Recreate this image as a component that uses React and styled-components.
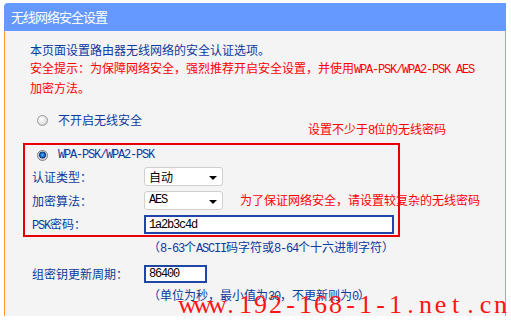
import React from "react";
import styled, { createGlobalStyle } from "styled-components";

const BLUE = "#0c3a9c";
const RED = "#ff0000";

const GlobalStyle = createGlobalStyle`
  html, body {
    margin: 0;
    padding: 0;
    background: #fff;
  }
  body {
    font-family: "Noto Sans CJK SC", "Noto Sans", sans-serif;
  }
`;

const Page = styled.div`
  width: 511px;
  height: 323px;
  padding: 3px 0 0 4px;
  box-sizing: border-box;
  overflow: hidden;
`;

const Frame = styled.div`
  width: 502px;
`;

const Header = styled.div`
  height: 28px;
  background: #6699ff;
  border-top-left-radius: 4px;
  color: #fff;
  font-size: 13px;
  line-height: 28px;
  padding-left: 7px;
  letter-spacing: -1px;
`;

const Panel = styled.div`
  position: relative;
  height: 285px;
  box-sizing: border-box;
  background: #f4f4f4;
  border-left: 1px solid #ff9a2e;
  border-right: 1px solid #ff9a2e;
  padding: 10px 0 0 25px;
  color: ${BLUE};
  font-size: 12px;
`;

const Intro = styled.p`
  margin: 0;
  line-height: 18px;
  white-space: nowrap;
`;

const Warn = styled.span`
  color: ${RED};
`;

const Mono = styled.span`
  font-family: "Liberation Mono", monospace;
  font-size: 12px;
  letter-spacing: -1.2px;
`;

const RadioRow = styled.div`
  display: flex;
  align-items: center;
  gap: 10px;
  height: 16px;
  line-height: 16px;
  margin: ${(p) => p.$margin};
`;

const Radio = styled.span`
  width: 11px;
  height: 11px;
  box-sizing: border-box;
  border-radius: 50%;
  border: 1px solid ${(p) => (p.$checked ? "#7d7d7d" : "#9a9a9a")};
  background: ${(p) =>
    p.$checked
      ? "radial-gradient(circle at 50% 45%, #6fc0ff 0, #1167c8 2px, #123a6e 3.2px, #dcdcdc 3.8px, #c4c4c4 100%)"
      : "radial-gradient(circle at 40% 35%, #ffffff 0, #e4e4e4 55%, #bcbcbc 100%)"};
`;

const SecurityBox = styled.div`
  width: 377px;
  box-sizing: border-box;
  margin: 15px 0 0 -7px;
  border: 2px solid #e60000;
  padding: 0 0 1px 7px;
`;

const FormGrid = styled.div`
  display: grid;
  grid-template-columns: 112px auto;
  grid-auto-rows: 19px;
  row-gap: 5px;
  align-items: center;
  margin: ${(p) => p.$margin};
`;

const Label = styled.span`
  line-height: 19px;
  white-space: nowrap;
`;

const Select = styled.div`
  width: 79px;
  height: 19px;
  box-sizing: border-box;
  display: flex;
  align-items: center;
  justify-content: space-between;
  padding: 0 5px 0 4px;
  background: #fff;
  border: 1px solid #cfcfcf;
  border-radius: 3px;
  color: #000;
  line-height: 17px;
`;

const Caret = styled.span`
  width: 0;
  height: 0;
  border-left: 4px solid transparent;
  border-right: 4px solid transparent;
  border-top: 4px solid #000;
  margin-top: 2px;
`;

const TextInput = styled.div`
  width: ${(p) => p.$width}px;
  height: ${(p) => p.$height}px;
  box-sizing: border-box;
  display: flex;
  align-items: center;
  padding-left: 3px;
  background: #fff;
  border: 2px solid #1f45a8;
  color: #000;
`;

const Hint = styled.div`
  margin: ${(p) => p.$margin};
  line-height: 16px;
  white-space: nowrap;
`;

const Note = styled.div`
  position: absolute;
  left: ${(p) => p.$left}px;
  top: ${(p) => p.$top}px;
  color: ${RED};
  line-height: 16px;
  white-space: nowrap;
`;

const Watermark = styled.div`
  position: absolute;
  left: 173px;
  top: 261px;
  display: flex;
  color: #ff1414;
  font-family: "Liberation Serif", serif;
  font-size: 26px;
  line-height: 26px;
`;

const WatermarkChar = styled.span`
  width: 15px;
  text-align: center;
`;

export default function App() {
  const site = "www.192-168-1-1.net.cn";

  return (
    <>
      <GlobalStyle />
      <Page>
        <Frame>
          <Header>无线网络安全设置</Header>
          <Panel>
            <Intro>
              本页面设置路由器无线网络的安全认证选项。
              <br />
              <Warn>
                安全提示：为保障网络安全，强烈推荐开启安全设置，并使用
                <Mono>WPA-PSK/WPA2-PSK AES</Mono>
                <br />
                加密方法。
              </Warn>
            </Intro>

            <RadioRow $margin="15px 0 0 7px">
              <Radio />
              <span>不开启无线安全</span>
            </RadioRow>

            <SecurityBox>
              <RadioRow $margin="2px 0 0 5px">
                <Radio $checked />
                <Mono>WPA-PSK/WPA2-PSK</Mono>
              </RadioRow>
              <FormGrid $margin="4px 0 0 0">
                <Label>认证类型：</Label>
                <Select>
                  <span>自动</span>
                  <Caret />
                </Select>
                <Label>加密算法：</Label>
                <Select>
                  <Mono>AES</Mono>
                  <Caret />
                </Select>
                <Label>
                  <Mono>PSK</Mono>密码：
                </Label>
                <TextInput $width={250} $height={19}>
                  <Mono>1a2b3c4d</Mono>
                </TextInput>
              </FormGrid>
            </SecurityBox>

            <Hint $margin="2px 0 0 118px">
              （<Mono>8-63</Mono>个<Mono>ASCII</Mono>码字符或<Mono>8-64</Mono>
              个十六进制字符）
            </Hint>

            <FormGrid $margin="7px 0 0 2px">
              <Label>组密钥更新周期：</Label>
              <TextInput $width={63} $height={18}>
                <Mono>86400</Mono>
              </TextInput>
            </FormGrid>

            <Hint $margin="4px 0 0 118px">
              （单位为秒，最小值为<Mono>30</Mono>，不更新则为<Mono>0</Mono>）
            </Hint>

            <Note $left={303} $top={90}>
              设置不少于<Mono>8</Mono>位的无线密码
            </Note>
            <Note $left={235} $top={161}>
              为了保证网络安全，请设置较复杂的无线密码
            </Note>

            <Watermark>
              {site.split("").map((ch, i) => (
                <WatermarkChar key={i}>{ch}</WatermarkChar>
              ))}
            </Watermark>
          </Panel>
        </Frame>
      </Page>
    </>
  );
}
